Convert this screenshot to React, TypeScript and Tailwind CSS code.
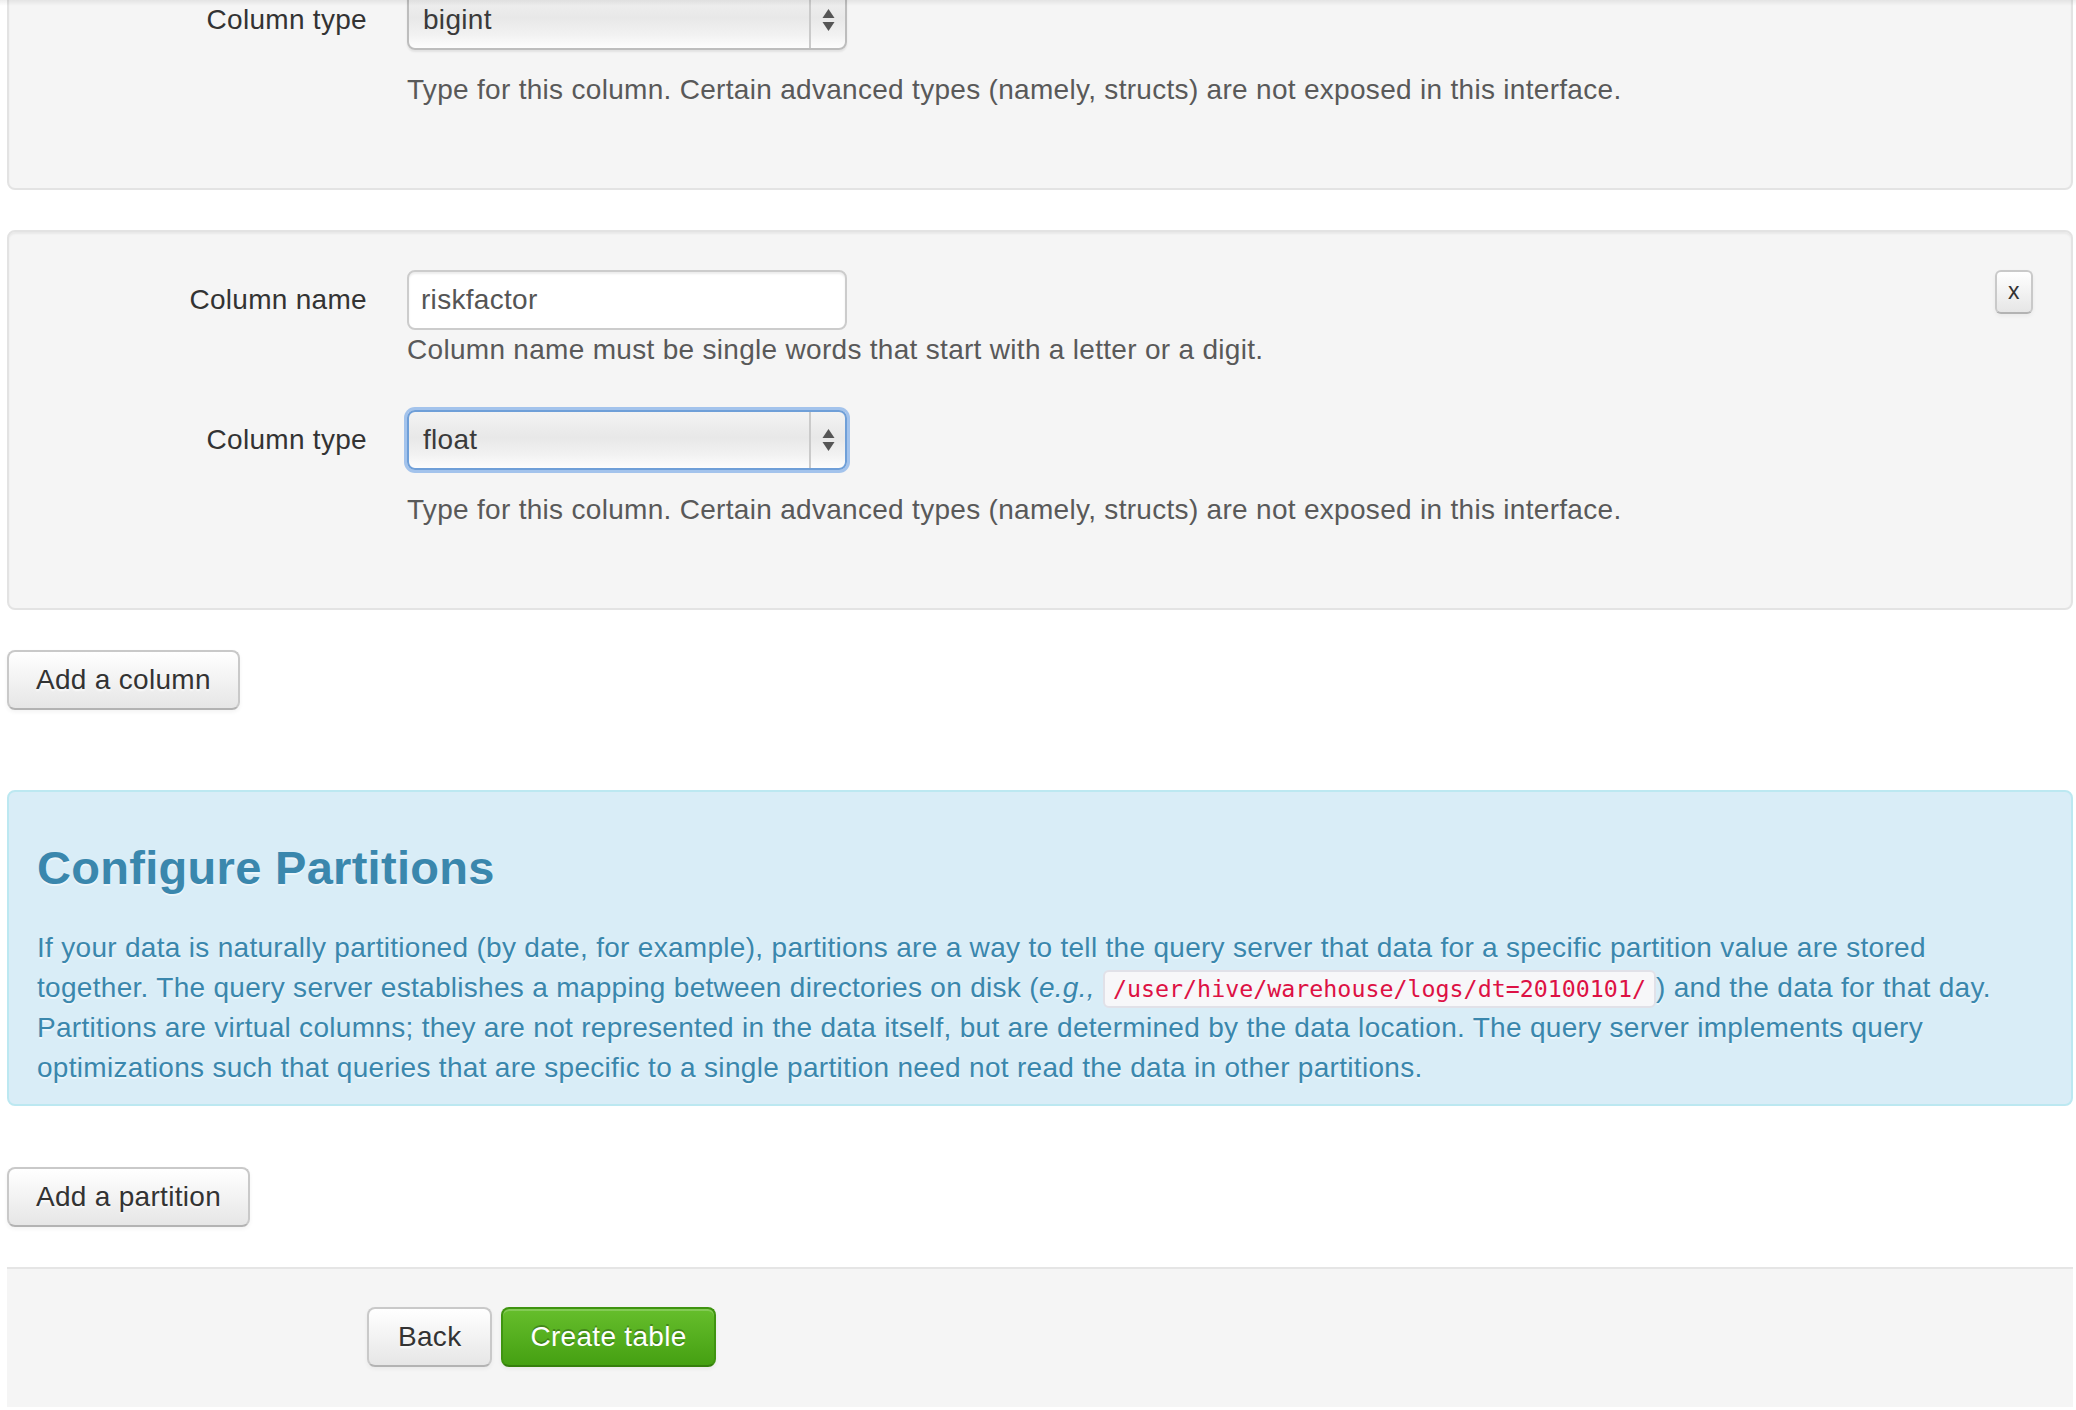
import React from "react";

const btnBase =
  "inline-flex h-[60px] items-center rounded-[8px] border-2 leading-[40px]";
const btnDefault =
  "border-[#c9c9c9] border-b-[#b3b3b3] bg-[linear-gradient(to_bottom,#ffffff,#e6e6e6)] text-[#333] shadow-[inset_0_2px_0_rgba(255,255,255,0.2),0_2px_4px_rgba(0,0,0,0.05)] [text-shadow:0_2px_2px_rgba(255,255,255,0.75)]";

function Arrows() {
  return (
    <svg width="13" height="22" viewBox="0 0 13 22" aria-hidden="true">
      <path d="M6.5 0 L12.5 9 H0.5 Z" fill="#555" />
      <path d="M0.5 13 H12.5 L6.5 22 Z" fill="#555" />
    </svg>
  );
}

function Select({ value, focused }: { value: string; focused?: boolean }) {
  return (
    <div
      className={
        focused
          ? "flex h-[60px] w-[440px] items-center rounded-[8px] border-2 border-[#6f9fd8] bg-[linear-gradient(to_bottom,#f3f3f3_0%,#e8e8e8_45%,#f1f1f1_75%,#fdfdfd_100%)] shadow-[0_0_0_3px_rgba(135,178,232,0.75)]"
          : "flex h-[60px] w-[440px] items-center rounded-[8px] border-2 border-[#bdbdbd] bg-[linear-gradient(to_bottom,#f3f3f3_0%,#e8e8e8_45%,#f1f1f1_75%,#fdfdfd_100%)] shadow-[0_2px_2px_rgba(0,0,0,0.08)]"
      }
    >
      <span className="flex-1 pl-[14px] text-[#3a3a3a]">{value}</span>
      <div className="flex h-full w-[36px] items-center justify-center border-l-2 border-[#cacaca]">
        <Arrows />
      </div>
    </div>
  );
}

function ColumnPanel({
  name,
  type,
  focused,
  className,
}: {
  name: string;
  type: string;
  focused?: boolean;
  className?: string;
}) {
  return (
    <div
      className={
        "mb-[40px] flex rounded-[8px] border-2 border-[#e3e3e3] bg-[#f5f5f5] p-[38px] shadow-[inset_0_2px_2px_rgba(0,0,0,0.05)] " +
        (className ?? "")
      }
    >
      <div className="flex-1">
        <div className="mb-[40px] flex">
          <label className="w-[320px] shrink-0 pt-[10px] text-right">Column name</label>
          <div className="ml-[40px]">
            <div className="flex h-[60px] w-[440px] items-center rounded-[8px] border-2 border-[#cccccc] bg-white px-[12px] text-[#555] shadow-[inset_0_2px_2px_rgba(0,0,0,0.075)]">
              {name}
            </div>
            <p className="text-[#595959]">
              Column name must be single words that start with a letter or a digit.
            </p>
          </div>
        </div>
        <div className="mb-[40px] flex">
          <label className="w-[320px] shrink-0 pt-[10px] text-right">Column type</label>
          <div className="ml-[40px]">
            <Select value={type} focused={focused} />
            <p className="mt-[20px] text-[#595959]">
              Type for this column. Certain advanced types (namely, structs) are not exposed in
              this interface.
            </p>
          </div>
        </div>
      </div>
      <div className="shrink-0">
        <button className="flex h-[44px] w-[38px] items-center justify-center rounded-[6px] border-2 border-[#c9c9c9] border-b-[#b3b3b3] bg-[linear-gradient(to_bottom,#ffffff,#e6e6e6)] pb-[3px] text-[23px] font-medium leading-[40px] text-[#333] shadow-[0_2px_4px_rgba(0,0,0,0.05)]">
          x
        </button>
      </div>
    </div>
  );
}

export default function App() {
  return (
    <div className="relative h-[1410px] w-full overflow-hidden bg-white font-['Liberation_Sans',Arial,sans-serif] text-[28px] leading-[40px] tracking-[0.3px] text-[#333]">
      <div className="pl-[7px] pr-[3px]">
        <ColumnPanel name="patient_id" type="bigint" className="-mt-[190px]" />
        <ColumnPanel name="riskfactor" type="float" focused />

        <div>
          <button className={btnBase + " px-[27px] " + btnDefault}>Add a column</button>
        </div>

        <div className="mt-[80px] rounded-[8px] border-2 border-[#bce8f1] bg-[#d9edf7] pb-[16px] pl-[28px] pr-[60px] pt-[16px] text-[#3a87ad] [text-shadow:0_2px_0_rgba(255,255,255,0.5)]">
          <h3 className="my-[20px] text-[47px] font-bold leading-[80px]">Configure Partitions</h3>
          <p>
            If your data is naturally partitioned (by date, for example), partitions are a way to
            tell the query server that data for a specific partition value are stored together.
            The query server establishes a mapping between directories on disk (<em>e.g.,</em>{" "}
            <code className="inline-block rounded-[6px] border-2 border-[#e1e1e8] bg-[#f7f7f9] px-[8px] py-[2px] font-['DejaVu_Sans_Mono',monospace] text-[23.3px] leading-[30px] tracking-normal text-[#dd1144] [text-shadow:none]">
              /user/hive/warehouse/logs/dt=20100101/
            </code>
            ) and the data for that day. Partitions are virtual columns; they are not represented
            in the data itself, but are determined by the data location. The query server
            implements query optimizations such that queries that are specific to a single
            partition need not read the data in other partitions.
          </p>
        </div>

        <div className="mt-[61px]">
          <button className={btnBase + " px-[27px] " + btnDefault}>Add a partition</button>
        </div>

        <div className="mt-[40px] flex border-t-2 border-[#e5e5e5] bg-[#f5f5f5] pb-[40px] pl-[360px] pt-[38px]">
          <button className={btnBase + " px-[29px] " + btnDefault}>Back</button>
          <button
            className={
              btnBase +
              " ml-[9px] px-[27px] border-[#3f9410] border-b-[#357f0c] bg-[linear-gradient(to_bottom,#66be2c,#45a012)] text-white shadow-[inset_0_2px_0_rgba(255,255,255,0.2),0_2px_4px_rgba(0,0,0,0.05)] [text-shadow:0_-2px_0_rgba(0,0,0,0.25)]"
            }
          >
            Create table
          </button>
        </div>
      </div>
      <div className="pointer-events-none absolute inset-x-0 top-0 h-[6px] bg-[linear-gradient(to_bottom,rgba(0,0,0,0.07),rgba(0,0,0,0))]" />
    </div>
  );
}
